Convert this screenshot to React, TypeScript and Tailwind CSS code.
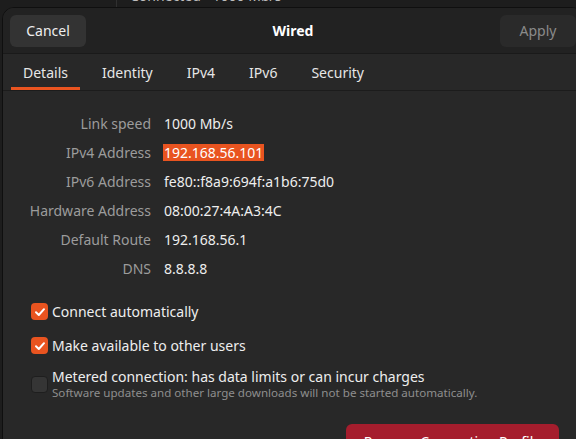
import React from 'react';

const details = [
  { label: 'Link speed', value: '1000 Mb/s' },
  { label: 'IPv4 Address', value: '192.168.56.101', selected: true },
  { label: 'IPv6 Address', value: 'fe80::f8a9:694f:a1b6:75d0' },
  { label: 'Hardware Address', value: '08:00:27:4A:A3:4C' },
  { label: 'Default Route', value: '192.168.56.1' },
  { label: 'DNS', value: '8.8.8.8' },
];

const tabs = ['Details', 'Identity', 'IPv4', 'IPv6', 'Security'];

const Check = ({ checked }: { checked: boolean }) =>
  checked ? (
    <span className="w-[17px] h-[17px] rounded-[4px] bg-[#e95420] flex items-center justify-center shrink-0">
      <svg width="12" height="12" viewBox="0 0 12 12" fill="none">
        <path d="M2 6.3 L4.8 9 L10 3.2" stroke="#fff" strokeWidth="2" strokeLinecap="round" strokeLinejoin="round" />
      </svg>
    </span>
  ) : (
    <span className="w-[17px] h-[17px] rounded-[4px] bg-[#353535] border border-[#1e1e1e] shrink-0" />
  );

export default function App() {
  return (
    <div className="relative w-[576px] h-[439px] overflow-hidden bg-[#1d1d1d] font-['Noto_Sans',sans-serif] text-[14px]">
      {/* window behind the dialog */}
      <div className="absolute left-[116px] top-0 w-px h-[8px] bg-[#303030]" />
      <div className="absolute left-[130px] top-[-13px] text-[#bdbdbd] leading-[18px]">Connected - 1000 Mb/s</div>

      {/* dialog */}
      <div className="absolute left-[2px] top-[7px] w-[582px] h-[470px] rounded-t-[12px] border border-[#0f0f0f] bg-[#282828] overflow-hidden flex flex-col">
        <div className="h-[46px] bg-[#222222] border-b border-[#1a1a1a] flex items-center justify-between px-[7px] relative">
          <button className="w-[76px] h-[32px] rounded-[6px] bg-[#333333] text-[#eeeeee]">Cancel</button>
          <div className="absolute left-0 right-0 text-center font-bold text-white pointer-events-none">Wired</div>
          <button className="w-[76px] h-[32px] rounded-[6px] bg-[#2a2a2a] text-[#8a8a8a]">Apply</button>
        </div>

        <div className="h-[37px] border-b border-[#1c1c1c] flex pl-[8px] gap-[10px]">
          {tabs.map((t, i) => (
            <div
              key={t}
              className={`px-3 flex items-center h-full border-b-[3px] ${i === 0 ? 'border-[#e95420]' : 'border-transparent'} text-[#e6e6e6]`}
            >
              <span className="mt-[3px]">{t}</span>
            </div>
          ))}
        </div>

        <div className="pt-[18px] grid grid-cols-[148px_1fr] gap-x-[13px]">
          {details.map(d => (
            <React.Fragment key={d.label}>
              <div className="h-[29px] flex items-center justify-end text-[#9c9c9c]">{d.label}</div>
              <div className="h-[29px] flex items-center">
                <span className={d.selected ? 'bg-[#e95420] text-white leading-[17px] px-px -ml-px' : 'text-[#eeeeee]'}>{d.value}</span>
              </div>
            </React.Fragment>
          ))}
        </div>

        <div className="mt-[20px] ml-[28px] flex flex-col">
          <label className="h-[17px] flex items-center gap-[4px] text-[#eeeeee]">
            <Check checked />
            Connect automatically
          </label>
          <label className="mt-[17px] h-[17px] flex items-center gap-[4px] text-[#eeeeee]">
            <Check checked />
            Make available to other users
          </label>
          <label className="mt-[14px] flex items-center gap-[4px]">
            <Check checked={false} />
            <div className="flex flex-col">
              <span className="leading-[18px] text-[#eeeeee]">Metered connection: has data limits or can incur charges</span>
              <span className="leading-[14px] text-[11.6px] text-[#8e8e8e]">Software updates and other large downloads will not be started automatically.</span>
            </div>
          </label>
        </div>

        <div className="mt-[24px] flex justify-end pr-[24px]">
          <button className="w-[213px] h-[34px] rounded-[6px] bg-[#a51d2d] text-white">Remove Connection Profile</button>
        </div>
      </div>
    </div>
  );
}
